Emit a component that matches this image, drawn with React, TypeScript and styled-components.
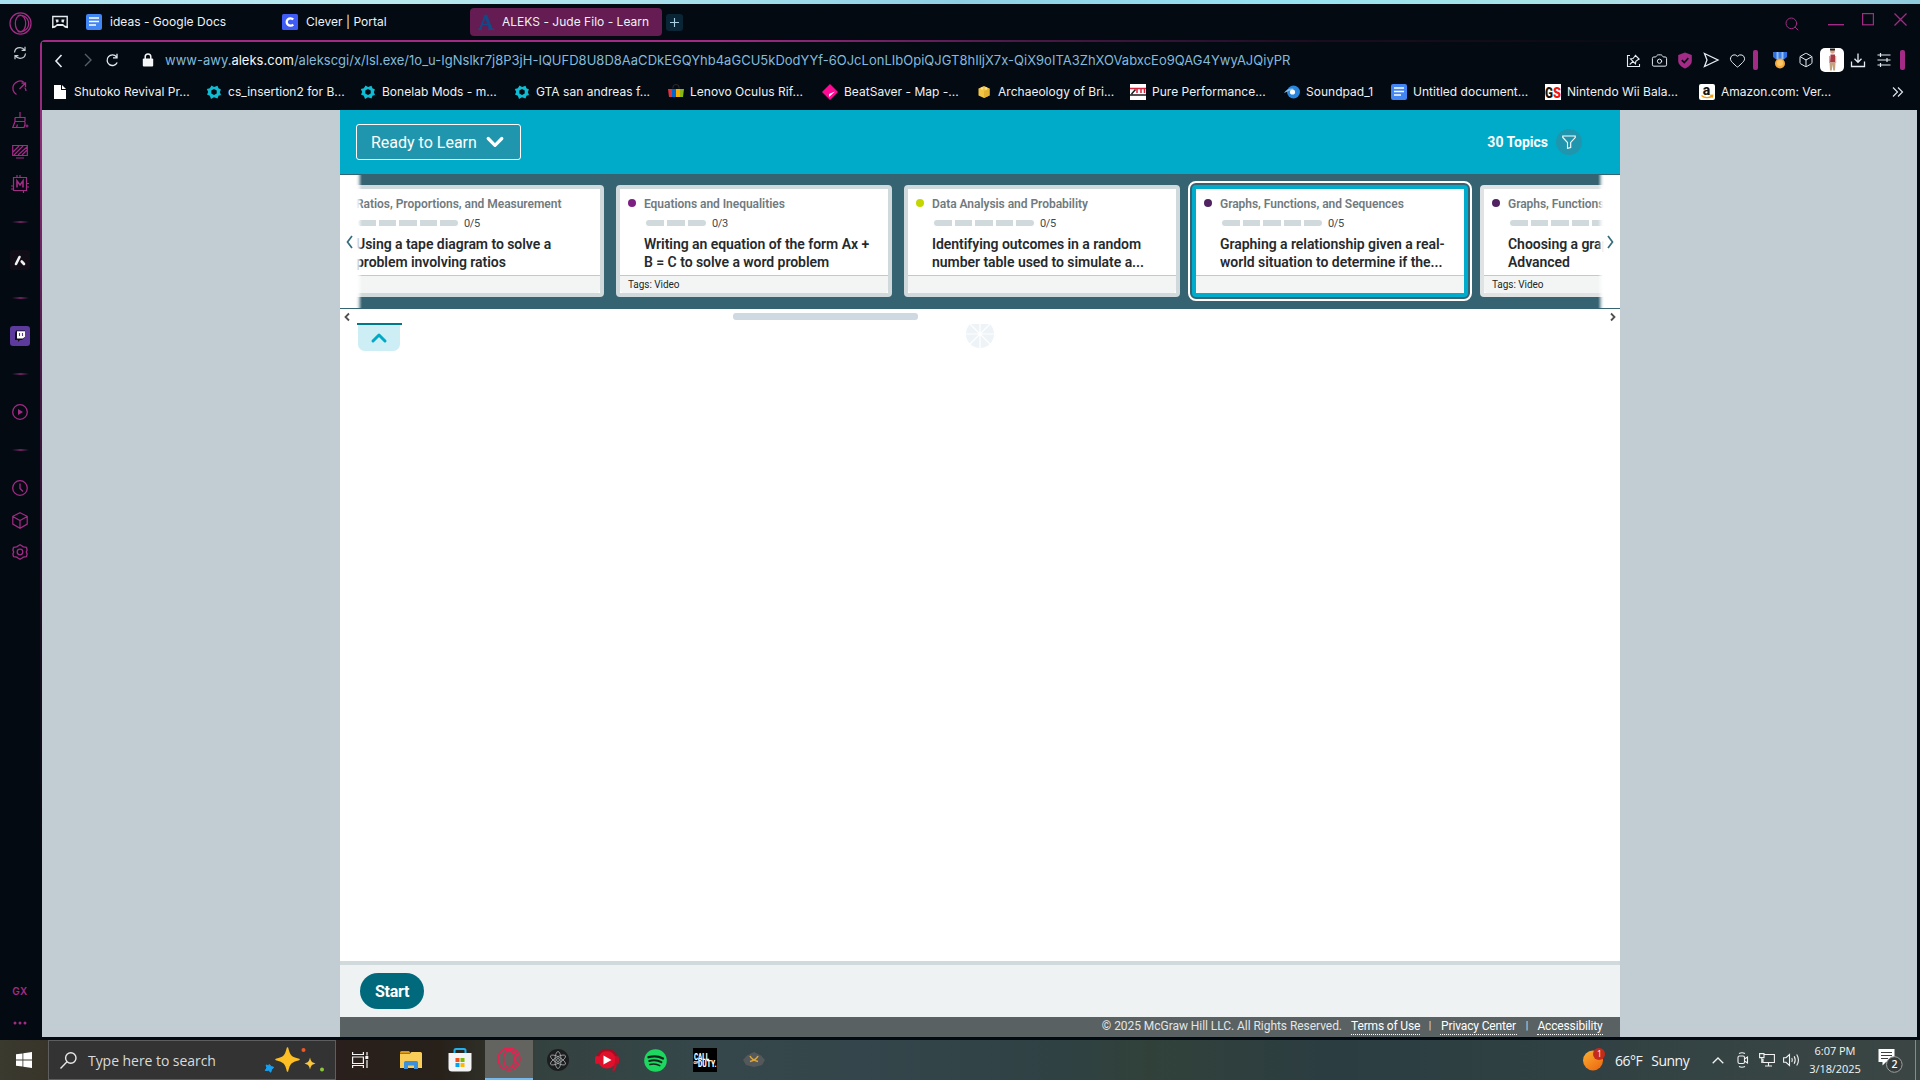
import React from 'react';
import styled, { createGlobalStyle } from 'styled-components';
import { Box, Camera, Heart, Search } from 'lucide-react';

const UI = '"Inter", "Liberation Sans", sans-serif';
const PAGE = '"Roboto", "Liberation Sans", sans-serif';
const WIN = '"Open Sans", "Noto Sans", sans-serif';
const MAGENTA = '#a32b86';
const DARK = '#030a12';

const Global = createGlobalStyle`
  *, *::before, *::after { box-sizing: border-box; }
  body { margin: 0; background: ${DARK}; overflow: hidden; }
  svg { display: block; flex: none; overflow: visible; }
`;

const Screen = styled.div`
  width: 1920px;
  height: 1080px;
  display: flex;
  flex-direction: column;
  background: ${DARK};
  font-family: ${UI};
  overflow: hidden;
`;
const Wallpaper = styled.div`
  height: 4px;
  flex: none;
  background: linear-gradient(90deg, #a9e1f0, #b9e9ee 20%, #9fdcea 40%, #8fcfe4 50%, #96e2f2 66%, #a6e3e6 80%, #b0dbe6 88%, #8fcbdd);
`;
const Browser = styled.div`
  height: 1036px;
  display: flex;
`;

/* Sidebar */
const Sidebar = styled.nav`
  width: 40px;
  padding-bottom: 1px;
  display: flex;
  flex-direction: column;
  flex: none;
  color: ${MAGENTA};
`;
const SideSlot = styled.div<{ $h?: number; $top?: string }>`
  height: ${p => p.$h ?? 32}px;
  margin-top: ${p => p.$top ?? '0'};
  display: flex;
  align-items: center;
  justify-content: center;
  flex: none;
`;
const SideRule = styled.div`
  width: 17px;
  height: 2px;
  background: linear-gradient(90deg, transparent, #6b2360 50%, transparent);
`;
const SideApp = styled.div<{ $bg: string }>`
  width: 20px;
  height: 20px;
  border-radius: 3px;
  background: ${p => p.$bg};
  display: flex;
  align-items: center;
  justify-content: center;
`;
const GxLabel = styled.span`
  font-size: 10px;
  font-weight: 600;
  letter-spacing: 0.4px;
`;

/* Window chrome */
const Main = styled.div`
  flex: 1;
  min-width: 0;
  display: flex;
  flex-direction: column;
`;
const TabStrip = styled.div`
  height: 36px;
  padding: 4px 4px 4px 12px;
  display: flex;
  align-items: center;
  flex: none;
`;
const Tabs = styled.div`
  display: flex;
  align-items: center;
  gap: 4px;
  margin-left: 10px;
`;
const Tab = styled.div<{ $active?: boolean }>`
  width: 192px;
  height: 28px;
  padding: 0 8px;
  display: flex;
  align-items: center;
  gap: 8px;
  border-radius: 4px;
  color: #eef2f5;
  font-size: 12px;
  white-space: nowrap;
  background: ${p => (p.$active ? '#641c52' : 'transparent')};
`;
const TabTitle = styled.span`
  padding-bottom: 1px;
  line-height: 16px;
  letter-spacing: 0.02px;
`;
const NewTab = styled.div`
  width: 17px;
  height: 17px;
  border-radius: 3px;
  background: #0a2536;
  display: flex;
  align-items: center;
  justify-content: center;
`;
const WindowButtons = styled.div`
  margin-left: auto;
  display: flex;
  align-items: center;
  color: ${MAGENTA};
`;
const WindowSlot = styled.div<{ $gap?: number; $drop?: number }>`
  width: 32px;
  margin-right: ${p => p.$gap ?? 0}px;
  padding-top: ${p => p.$drop ?? 0}px;
  height: 24px;
  display: flex;
  justify-content: center;
`;
const Frame = styled.div`
  flex: 1;
  padding: 2px 0 0 2px;
  border-top-left-radius: 5px;
  background:
    linear-gradient(90deg, ${MAGENTA} 0%, ${MAGENTA} 36%, #4c1a48 52%, #1b0d20 68%, ${DARK} 90%) 0 0 / 100% 2px no-repeat,
    linear-gradient(180deg, ${MAGENTA} 0%, #8a2a76 12%, #4a1a48 33%, #1c0e23 58%, ${DARK} 85%) 0 0 / 2px 100% no-repeat;
`;
const FrameInner = styled.div`
  height: 100%;
  display: flex;
  flex-direction: column;
  background: ${DARK};
  border-top-left-radius: 4px;
`;
const NavBar = styled.div`
  height: 36px;
  padding: 0 15px 0 3px;
  display: flex;
  align-items: center;
  flex: none;
  color: #e6edf2;
`;
const Slot = styled.div<{ $w?: number; $ml?: number }>`
  width: ${p => p.$w ?? 26}px;
  margin-left: ${p => p.$ml ?? 0}px;
  display: flex;
  align-items: center;
  justify-content: center;
  flex: none;
`;
const Url = styled.div`
  flex: 1;
  margin-left: 7px;
  font-size: 13px;
  letter-spacing: 0.01px;
  line-height: 20px;
  white-space: nowrap;
  color: #84bbdc;
  b { font-weight: 400; color: #f2f8fb; }
`;
const AccentBar = styled.div<{ $ml: number }>`
  width: 5px;
  height: 20px;
  margin-left: ${p => p.$ml}px;
  border-radius: 2px;
  background: ${MAGENTA};
`;
const Avatar = styled.div`
  width: 24px;
  height: 24px;
  margin-left: 2px;
  border-radius: 5px;
  background: #fff;
  display: flex;
  justify-content: center;
  flex: none;
`;
const Bookmarks = styled.div`
  height: 32px;
  padding: 0 10px 4px 10px;
  display: flex;
  align-items: center;
  flex: none;
`;
const Bookmark = styled.div<{ $w?: number }>`
  width: ${p => p.$w ?? 154}px;
  display: flex;
  align-items: center;
  gap: 6px;
  font-size: 12px;
  line-height: 18px;
  letter-spacing: 0.02px;
  color: #eef2f5;
  white-space: nowrap;
`;
const More = styled.div`
  margin-left: auto;
  margin-right: 6px;
`;

/* Web page */
const Viewport = styled.div`
  width: 1875px;
  height: 927px;
  display: flex;
  justify-content: center;
  padding-left: 1px;
  background: #c1cdd3;
`;
const Page = styled.div`
  width: 1280px;
  display: flex;
  flex-direction: column;
  background: #fff;
  font-family: ${PAGE};
`;
const Header = styled.header`
  height: 64px;
  padding: 0 38px 0 16px;
  display: flex;
  align-items: center;
  justify-content: space-between;
  background: #00abca;
  color: #fff;
`;
const StageButton = styled.button`
  width: 165px;
  height: 36px;
  padding: 0 16px 0 14px;
  display: flex;
  align-items: center;
  justify-content: space-between;
  border: 1px solid #fff;
  border-radius: 3px;
  background: #1f96ad;
  color: #fff;
  font: 400 16px ${PAGE};
`;
const TopicCount = styled.div`
  display: flex;
  align-items: center;
  gap: 8px;
  font-size: 14px;
  font-weight: 700;
  line-height: 18px;
  span { padding-bottom: 1px; }
`;
const FilterButton = styled.div`
  width: 26px;
  height: 26px;
  border-radius: 50%;
  background: #1f96ad;
  display: flex;
  align-items: center;
  justify-content: center;
`;
const Carousel = styled.section`
  position: relative;
  height: 135px;
  padding-top: 11px;
  overflow: hidden;
  background: #356371;
  flex: none;
`;
const CardRow = styled.div`
  display: flex;
  gap: 12px;
  margin-left: -12px;
`;
const CardBox = styled.article<{ $edge: string; $selected?: boolean }>`
  width: 276px;
  height: 112px;
  flex: none;
  display: flex;
  flex-direction: column;
  border: 4px solid ${p => p.$edge};
  border-radius: 4px;
  background: #fff;
  outline: ${p => (p.$selected ? '2px solid #fff' : 'none')};
  outline-offset: 2px;
`;
const CardTop = styled.div`
  height: 24px;
  padding: 5px 0 0 8px;
  display: flex;
  align-items: center;
  gap: 8px;
  color: #717a7e;
  font-size: 12px;
  font-weight: 600;
  letter-spacing: -0.04px;
  line-height: 16px;
  white-space: nowrap;
`;
const Dot = styled.span<{ $c: string }>`
  width: 8px;
  height: 8px;
  margin-top: -1px;
  border-radius: 50%;
  background: ${p => p.$c};
`;
const ProgressRow = styled.div`
  height: 20px;
  padding: 0 0 0 26px;
  display: flex;
  align-items: center;
  gap: 6px;
  color: #41484b;
  font-size: 11px;
  letter-spacing: -0.35px;
`;
const Meter = styled.div<{ $n: number }>`
  width: ${p => p.$n * 20}px;
  height: 6px;
  display: flex;
  gap: 3px;
  border-radius: 3px;
  overflow: hidden;
  span { flex: 1; background: #d0dadd; }
`;
const CardTitle = styled.h3`
  margin: 0;
  height: 42px;
  padding: 2px 0 0 24px;
  color: #262a2c;
  font-size: 14px;
  font-weight: 600;
  letter-spacing: -0.045px;
  line-height: 18px;
  white-space: nowrap;
`;
const CardTags = styled.div`
  flex: 1;
  padding-left: 8px;
  display: flex;
  align-items: center;
  border-top: 1px solid #c3c8c9;
  border-radius: 0 0 4px 4px;
  background: #f3f5f5;
  color: #22272a;
  font-size: 10px;
  letter-spacing: -0.05px;
`;
const Fade = styled.div<{ $side: 'left' | 'right' }>`
  position: absolute;
  top: 1px;
  ${p => p.$side}: 0;
  width: 22px;
  height: 133px;
  display: flex;
  align-items: center;
  justify-content: ${p => (p.$side === 'left' ? 'flex-start' : 'flex-end')};
  padding: 0 6px;
  background: linear-gradient(to ${p => p.$side}, rgba(255,255,255,0) 0, rgba(255,255,255,.85) 4px, #fff 6px);
`;
const ScrollTrack = styled.div`
  height: 14px;
  padding: 4px 4px 0;
  display: flex;
  justify-content: space-between;
  flex: none;
`;
const Thumb = styled.div`
  width: 185px;
  height: 7px;
  margin: 0 auto 0 383px;
  border-radius: 3px;
  background: #cfd9e2;
`;
const Content = styled.main`
  flex: 1;
  display: grid;
  grid-template-columns: 1fr 28px 1fr;
  align-items: start;
`;
const Collapse = styled.div`
  width: 45px;
  margin-left: 17px;
  border-top: 2px solid #007a8b;
`;
const CollapseBody = styled.div`
  width: 42px;
  height: 26px;
  margin-left: 1px;
  display: flex;
  align-items: center;
  justify-content: center;
  border-radius: 0 0 7px 7px;
  background: #cceef4;
`;
const SpinnerCrop = styled.div`
  height: 24px;
  margin-top: 1px;
  display: flex;
  align-items: flex-end;
  overflow: hidden;
`;
const ActionBar = styled.div`
  height: 56px;
  padding-left: 20px;
  display: flex;
  align-items: center;
  flex: none;
  border-top: 4px solid #d0dadd;
  background: #eef2f3;
`;
const StartButton = styled.button`
  width: 64px;
  height: 36px;
  padding: 0;
  border: 0;
  border-radius: 18px;
  background: #00697c;
  color: #fff;
  font: 700 16px ${PAGE};
  letter-spacing: -0.3px;
`;
const Legal = styled.footer`
  height: 20px;
  padding-right: 17px;
  display: flex;
  justify-content: flex-end;
  align-items: flex-start;
  flex: none;
  background: #5a6162;
  color: #e2e6e6;
  font-size: 12px;
  line-height: 16px;
`;
const Copyright = styled.span`
  margin-right: 9px;
  padding-top: 1px;
  letter-spacing: -0.05px;
`;
const LegalLink = styled.a<{ $w: number }>`
  width: ${p => p.$w}px;
  padding-top: 1px;
  text-align: center;
  letter-spacing: -0.15px;
  color: #fff;
  border-bottom: 1px dotted #fff;
  white-space: nowrap;
`;
const Pipe = styled.span`
  width: 20px;
  text-align: center;
  padding-top: 1px;
  font-size: 10px;
`;

/* Taskbar */
const Taskbar = styled.div`
  height: 40px;
  flex: none;
  display: flex;
  align-items: center;
  font-family: ${WIN};
  color: #f3f5f5;
  background: linear-gradient(90deg, #3a3a2f 0, #38342a 48px, #2a1f1c 340px, #27211a 440px, #30332c 500px, #34423f 540px, #35474a 700px, #34464b 860px, #2f4143 1060px, #31413a 1150px, #2c3d42 1330px, #304143 1560px, #3b4644 1920px);
`;
const TaskSlot = styled.div<{ $w: number; $active?: boolean }>`
  width: ${p => p.$w}px;
  height: 40px;
  display: flex;
  align-items: center;
  justify-content: center;
  flex: none;
  background: ${p => (p.$active ? '#63645f' : 'transparent')};
  border-bottom: ${p => (p.$active ? '2px solid #76b9ed' : '0')};
`;
const SearchBox = styled.div`
  width: 288px;
  height: 40px;
  padding: 0 10px 0 11px;
  display: flex;
  align-items: center;
  border: 1px solid #5e5e5e;
  background: #333;
  color: #dadada;
  font-size: 14px;
  span { margin-left: 11px; margin-right: auto; letter-spacing: -0.05px; }
`;
const Tray = styled.div`
  margin-left: auto;
  display: flex;
  align-items: center;
  height: 40px;
`;
const Weather = styled.div`
  width: 123px;
  display: flex;
  align-items: center;
  gap: 9px;
  font-size: 14px;
  letter-spacing: -0.5px;
  white-space: nowrap;
`;
const Clock = styled.div`
  width: 64px;
  text-align: center;
  font-size: 11px;
  line-height: 18px;
  letter-spacing: -0.05px;
`;
const ShowDesktop = styled.div`
  width: 5px;
  height: 40px;
  border-left: 1px solid #868c8c;
`;

/* Icons */
const OperaRing = ({ size, color }: { size: number; color: string }) => (
  <svg width={size} height={size} viewBox="0 0 24 24" fill="none" stroke={color} strokeWidth="1.3">
    <circle cx="12" cy="12" r="11" />
    <ellipse cx="12" cy="12" rx="5.4" ry="8.6" />
    <path d="M9 3.8C13.5 1.8 20.500 5.500 20.500 12S13.500 22.200 9 20.200" />
  </svg>
);
const DocIcon = () => (
  <svg width="16" height="16" viewBox="0 0 16 16">
    <rect width="16" height="16" rx="2" fill="#4285f4" />
    <path d="M3 4h10M3 7.500h10M3 11h7" stroke="#fff" strokeWidth="1.700" />
  </svg>
);
const ModIcon = () => (
  <svg width="16" height="16" viewBox="0 0 16 16">
    <path d="M5.500 1.500L8 3l3.500-1.200 1 2.400L15 5.500 13.800 8l1.200 3-2.500.8-1 2.700L8 13.200 5 15l-1.200-3.200L1 10.500 2.200 8 .8 5l3-.8z" fill="#10bcd4" strokeLinejoin="round" />
    <path d="M8 5l2.700 1.500v3L8 11 5.300 9.500v-3z" fill={DARK} />
  </svg>
);
const Line = ({ d, s = 16, w = 1.2, fill = 'none' }: { d: string; s?: number; w?: number; fill?: string }) => (
  <svg width={s} height={s} viewBox={`0 0 ${s} ${s}`} fill={fill} stroke="currentColor" strokeWidth={w}>
    <path d={d} />
  </svg>
);
const Sync = () => (
  <svg width="14" height="14" viewBox="0 0 14 14" fill="none" stroke="#c9ced2" strokeWidth="1.200">
    <path d="M1.500 6.500C1.800 3.500 4.200 1.700 7 1.700c2 0 3.600.9 4.600 2.400M12 .8v3.600H8.600M12.500 7.500c-.3 3-2.700 4.800-5.500 4.800-2 0-3.600-.9-4.600-2.400M2 13.200V9.600h3.400" />
  </svg>
);
const StoreBag = () => (
  <svg width="16" height="16" viewBox="0 0 16 16">
    <path d="M5 4.500V3a3 2.500 0 0 1 6 0v1.500" fill="none" stroke="#2a2a2a" />
    <path d="M0 5h4v8H1z" fill="#e53238" /><path d="M4 5h4v8H4z" fill="#0064d2" />
    <path d="M8 5h4v8H8z" fill="#f5af02" /><path d="M12 5h4l-1 8h-3z" fill="#86b817" />
  </svg>
);
const BeatSaver = () => (
  <svg width="16" height="16" viewBox="0 0 16 16">
    <path d="M8 0l8 8-8 8-8-8z" fill="#ff0b93" /><path d="M13 7.500L7 10v3z" fill="#fff" />
  </svg>
);
const Brick = () => (
  <svg width="12" height="14" viewBox="0 0 12 14">
    <path d="M6 1l5.500 2.500v7L6 13 .5 10.500v-7z" fill="#f4c542" />
    <path d="M6 6l5.500-2.500v7L6 13z" fill="#e5b132" />
    <circle cx="4" cy="3.500" r="1.300" fill="#ffe08a" /><circle cx="8" cy="3.500" r="1.300" fill="#ffe08a" />
  </svg>
);
const PureIcon = () => (
  <svg width="16" height="16" viewBox="0 0 16 16">
    <rect width="16" height="16" fill="#fff" />
    <path d="M0 4.500h16M7 5v4M11 5v4M14.500 5v4" stroke="#d5213a" strokeWidth="1.500" />
    <path d="M1.500 10L5.500 5.500M0 11h16" stroke="#1b1b1b" strokeWidth="1.500" />
  </svg>
);
const Soundpad = () => (
  <svg width="16" height="16" viewBox="0 0 16 16">
    <circle cx="9.500" cy="8" r="6.500" fill="#2a86dc" />
    <path d="M0 9C2 5.500 6 3.500 10 5L6 6.500z" fill="#7fc0f5" />
    <circle cx="8.500" cy="8" r="2.600" fill="#fff" />
  </svg>
);
const GsIcon = () => (
  <svg width="16" height="16" viewBox="0 0 16 16">
    <rect width="16" height="16" fill="#fff" />
    <text x="0" y="13.500" fontFamily="Roboto, sans-serif" fontWeight="900" fontSize="15" textLength="8" lengthAdjust="spacingAndGlyphs" fill="#111">G</text>
    <text x="8" y="13.500" fontFamily="Roboto, sans-serif" fontWeight="900" fontSize="15" textLength="8" lengthAdjust="spacingAndGlyphs" fill="#f01414">S</text>
  </svg>
);
const AmazonIcon = () => (
  <svg width="16" height="16" viewBox="0 0 16 16">
    <rect width="16" height="16" rx="2" fill="#fff" />
    <text x="3.700" y="10.500" fontFamily="Roboto, sans-serif" fontWeight="800" fontSize="14" fill="#111">a</text>
    <path d="M2.500 11.500c3 2.700 7.500 2.700 10.500.6M11.200 11.300l2.500-.2-.5 2.500" fill="none" stroke="#f90" strokeWidth="1.300" />
  </svg>
);

type Topic = { area: string; dot: string; steps: number; lines: [string, string]; tags?: string; edge?: string; selected?: boolean };
const topics: Topic[] = [
  { area: 'Ratios, Proportions, and Measurement', dot: '#2a7fb8', steps: 5, lines: ['Using a tape diagram to solve a', 'problem involving ratios'] },
  { area: 'Equations and Inequalities', dot: '#7b1f83', steps: 3, lines: ['Writing an equation of the form Ax +', 'B = C to solve a word problem'], tags: 'Tags: Video' },
  { area: 'Data Analysis and Probability', dot: '#c3d600', steps: 5, lines: ['Identifying outcomes in a random', 'number table used to simulate a...'] },
  { area: 'Graphs, Functions, and Sequences', dot: '#4f2260', steps: 5, lines: ['Graphing a relationship given a real-', 'world situation to determine if the...'], edge: '#00accb', selected: true },
  { area: 'Graphs, Functions, and Sequences', dot: '#4f2260', steps: 5, lines: ['Choosing a graph', 'Advanced'], tags: 'Tags: Video', edge: '#dfe3e4' },
];

const TopicCard = ({ t }: { t: Topic }) => (
  <CardBox $edge={t.edge ?? '#d0dadd'} $selected={t.selected}>
    <CardTop><Dot $c={t.dot} />{t.area}</CardTop>
    <ProgressRow>
      <Meter $n={t.steps}>{Array.from({ length: t.steps }, (_, i) => <span key={i} />)}</Meter>
      0/{t.steps}
    </ProgressRow>
    <CardTitle>{t.lines[0]}<br />{t.lines[1]}</CardTitle>
    <CardTags>{t.tags}</CardTags>
  </CardBox>
);

const bookmarks: [React.ReactNode, string, number?][] = [
  [<svg width="16" height="16" viewBox="0 0 16 16"><path d="M2 1h7v5h5v9H2z" fill="#fff" /><path d="M10 1l4 4h-4z" fill="#fff" /></svg>, 'Shutoko Revival Pr...'],
  [<ModIcon />, 'cs_insertion2 for B...'],
  [<ModIcon />, 'Bonelab Mods - m...'],
  [<ModIcon />, 'GTA san andreas f...'],
  [<StoreBag />, 'Lenovo Oculus Rif...'],
  [<BeatSaver />, 'BeatSaver - Map -...'],
  [<Slot $w={16}><Brick /></Slot>, 'Archaeology of Bri...'],
  [<PureIcon />, 'Pure Performance...'],
  [<Soundpad />, 'Soundpad_1', 107],
  [<DocIcon />, 'Untitled document...'],
  [<GsIcon />, 'Nintendo Wii Bala...'],
  [<AmazonIcon />, 'Amazon.com: Ver...'],
];

const SideRail = () => (
  <Sidebar>
    <SideSlot $h={38}><OperaRing size={23} color={MAGENTA} /></SideSlot>
    <SideSlot $h={22}><Sync /></SideSlot>
    <SideSlot $top="8px"><Line d="M4.500 14.500A7 7 0 1 1 11.500 1.900M7.500 9l5.500-5.500M12.800 7.500a7 7 0 0 1 1.200 3.500M9.500 3.200l4-.2v4" w={1.3} /></SideSlot>
    <SideSlot>
      <Line d="M8 0v5M3 5.500h10v3.500M3 5.500v4M3 9.500h10M3 9.500L.8 15.500H12l1-3M13 9.500v4M13.500 14h3M15 12.500v3M4.500 15.500l1-3" s={17} w={1.2} />
    </SideSlot>
    <SideSlot><Line d="M.7 1.500h14.600v10H.7zM4 14h8M1 8l6-6M2 11l9-9M6 11l9-8M10 11l5-5" w={1.2} /></SideSlot>
    <SideSlot>
      <svg width="18" height="18" viewBox="0 0 18 18" fill="none" stroke="currentColor" strokeWidth="1.200">
        <path d="M2.500 2.500h13v13h-13zM6 0v2.500M9 0v2.500M12.500 15.500V18M0 11h2.500M0 14h2.500M15.500 8.500H18M15.500 12H18" />
        <path d="M6 12.500V6l3 4 3-4v6.500" strokeWidth="1.600" />
      </svg>
    </SideSlot>
    <SideSlot $h={44}><SideRule /></SideSlot>
    <SideSlot>
      <SideApp $bg="#110d17">
        <svg width="12" height="11" viewBox="0 0 12 11" stroke="#f1f1f1" strokeWidth="2.600" strokeLinecap="round"><path d="M2 9l3.500-7M7.700 6.500L10 9" /></svg>
      </SideApp>
    </SideSlot>
    <SideSlot $h={44}><SideRule /></SideSlot>
    <SideSlot>
      <SideApp $bg="#5d3b9c">
        <svg width="12" height="12" viewBox="0 0 12 12">
          <path d="M2 .5h9v6.500l-3 3H6L4 12V10H1V3z" fill="#111018" />
          <path d="M3 1.200h8v5.500L8.800 8.500H3z" fill="#fff" />
          <path d="M5.500 3v3M8.500 3v3" stroke="#5d3b9c" strokeWidth="1.100" />
        </svg>
      </SideApp>
    </SideSlot>
    <SideSlot $h={44}><SideRule /></SideSlot>
    <SideSlot>
      <svg width="16" height="16" viewBox="0 0 16 16"><circle cx="8" cy="8" r="7.300" fill="none" stroke="currentColor" strokeWidth="1.300" /><path d="M6 5l5 3-5 3z" fill="currentColor" /></svg>
    </SideSlot>
    <SideSlot $h={44}><SideRule /></SideSlot>
    <SideSlot><Line d="M8 .7a7.300 7.300 0 1 1 0 14.600A7.300 7.300 0 1 1 8 .7M8 3.500v5l3 3" w={1.3} /></SideSlot>
    <SideSlot><Line d="M8 .7l7.200 3.600v7.800L8 16.300.8 12.100V4.300zM.8 4.500L8 8.500l7.200-4M8 8.500v7.500" s={16} w={1.2} /></SideSlot>
    <SideSlot>
      <svg width="16" height="16" viewBox="0 0 16 16" fill="none" stroke="currentColor" strokeWidth="1.300">
        <path d="M6.300 1.800L8 .7l1.700 1.100 1.600 1.100 3.200.4.600 2.700L14.300 8l.8 2-.6 2.700-3.200.4-1.600 1.100L8 15.300l-1.700-1.100-1.600-1.100-3.200-.4L.9 10l.8-2-.8-2 .6-2.700 3.200-.4z" strokeLinejoin="round" />
        <circle cx="8" cy="8" r="2.800" />
      </svg>
    </SideSlot>
    <SideSlot $h={33} $top="auto"><GxLabel>GX</GxLabel></SideSlot>
    <SideSlot>
      <svg width="14" height="4" viewBox="0 0 14 4" fill="currentColor"><circle cx="2" cy="2" r="1.500" /><circle cx="7" cy="2" r="1.500" /><circle cx="12" cy="2" r="1.500" /></svg>
    </SideSlot>
  </Sidebar>
);

const TitleBar = () => (
  <TabStrip>
    <svg width="16" height="14" viewBox="0 0 16 14">
      <path d="M.8 11.500V1.500h14.400v10" fill="none" stroke="#e6ebee" strokeWidth="1.400" />
      <path d="M3.500 4.500h3v2.500l-2 .8zM12.500 4.500h-3v2.500l2 .8zM0 13.300V11l3-.2 2-1.800h6l2 1.800 3 .2v2.300l-3-.6-2-1.700H5l-2 1.700z" fill="#e6ebee" />
    </svg>
    <Tabs>
      <Tab><DocIcon /><TabTitle>ideas - Google Docs</TabTitle></Tab>
      <Tab>
        <svg width="16" height="16" viewBox="0 0 16 16"><rect width="16" height="16" rx="1.500" fill="#3f5cf5" /><path d="M11.200 5.600A3.700 3.700 0 1 0 11.200 10.400" fill="none" stroke="#fff" strokeWidth="2.300" /></svg>
        <TabTitle>Clever | Portal</TabTitle>
      </Tab>
      <Tab $active>
        <svg width="16" height="16" viewBox="0 0 16 16" fill="none" stroke="#124a88"><path d="M2 15.500L7.500 1" strokeWidth="2" /><path d="M7.500 1L13 15.500" strokeWidth="3.200" /><path d="M4 10.500h7.500M.3 15.300h3.500M10 15.300h6" strokeWidth="1.400" /></svg>
        <TabTitle>ALEKS - Jude Filo - Learn</TabTitle>
      </Tab>
      <NewTab><svg width="9" height="9" viewBox="0 0 9 9" stroke="#a9cfe4" strokeWidth="1.100"><path d="M4.500 0v9M0 4.500h9" /></svg></NewTab>
    </Tabs>
    <WindowButtons>
      <WindowSlot $gap={12} $drop={6}><Search size={16} strokeWidth={1.5} /></WindowSlot>
      <WindowSlot $drop={14}><svg width="16" height="2" viewBox="0 0 16 2"><path d="M0 .7h16" stroke="currentColor" strokeWidth="1.400" /></svg></WindowSlot>
      <WindowSlot $drop={3}><svg width="12" height="13" viewBox="0 0 12 13"><rect x=".6" y=".6" width="10.800" height="11.200" fill="none" stroke="currentColor" strokeWidth="1.200" /></svg></WindowSlot>
      <WindowSlot $drop={3}><svg width="13" height="13" viewBox="0 0 13 13"><path d="M.5.500l12 12M12.500.500l-12 12" stroke="currentColor" strokeWidth="1.300" /></svg></WindowSlot>
    </WindowButtons>
  </TabStrip>
);

const AddressBar = () => (
  <NavBar>
    <Slot $w={28}><Line d="M9.500 2L4 8l5.500 6" s={14} w={1.6} /></Slot>
    <Slot $w={29}><svg width="12" height="14" viewBox="0 0 12 14" fill="none" stroke="#56606a" strokeWidth="1.400"><path d="M3 1l6 6-6 6" /></svg></Slot>
    <Slot $w={20}><Line d="M12.200 9.500A5.300 5.300 0 1 1 11.500 3.800M12 0.800v4H8" s={14} w={1.3} /></Slot>
    <Slot $w={20} $ml={16}>
      <svg width="12" height="14" viewBox="0 0 12 14"><rect x=".8" y="5.500" width="10.400" height="8" rx="1" fill="#f4f6f7" /><path d="M3.200 6V3.800a2.800 2.800 0 0 1 5.600 0V6" fill="none" stroke="#f4f6f7" strokeWidth="1.500" /></svg>
    </Slot>
    <Url>www-awy.<b>aleks.com</b>/alekscgi/x/lsl.exe/1o_u-IgNslkr7j8P3jH-IQUFD8U8D8AaCDkEGQYhb4aGCU5kDodYYf-6OJcLonLIbOpiQJGT8hIljX7x-QiX9oITA3ZhXOVabxcEo9QAG4YwyAJQiyPR</Url>
    <Slot><Line d="M4 2.500H1.500V13.500h12V11M9 2l4.500 4.500M9.500 2.500L7 5.500l-2.500.3 5 5 .3-2.500 3.200-2.300M7 8.300L3.700 11.500" s={15} w={1.1} /></Slot>
    <Slot><Camera size={17} strokeWidth={1.4} /></Slot>
    <Slot>
      <svg width="16" height="17" viewBox="0 0 16 17"><path d="M8 .5l6.800 2.500v6c0 3.500-3.500 6-6.800 7.500C4.700 15 1.200 12.500 1.200 9V3z" fill={MAGENTA} /><path d="M4.800 8.200l2.500 2.400 4-4.500" fill="none" stroke={DARK} strokeWidth="1.600" /></svg>
    </Slot>
    <Slot><Line d="M1.500 1.500L15 8 1.500 14.500 4 8z" w={1.3} /></Slot>
    <Slot><Heart size={17} strokeWidth={1.4} /></Slot>
    <AccentBar $ml={3} />
    <Slot $ml={9}>
      <svg width="16" height="17" viewBox="0 0 16 17">
        <path d="M1 0h14v5l-5 4H6L1 5z" fill="#2f6fe0" /><path d="M4.500 0h7v7h-7z" fill="#8dbcf7" /><path d="M6.500 0h3v7h-3z" fill="#3e7fe8" />
        <circle cx="8" cy="11.500" r="5" fill="#f5a93c" /><circle cx="8" cy="11" r="3" fill="#ffc766" />
      </svg>
    </Slot>
    <Slot $w={25}><Box size={16} strokeWidth={1.5} /></Slot>
    <Avatar>
      <svg width="12" height="24" viewBox="0 0 12 24">
        <circle cx="6.500" cy="3.500" r="2.300" fill="#d9a384" /><path d="M4 .5h5v2H4z" fill="#1e1a1a" />
        <path d="M4.500 6.500h4.500v8H4z" fill="#a83a43" /><path d="M3.500 14.500h6L9 22.500H7.200l-.6-6-.8 6H4z" fill="#c4a27d" />
        <path d="M3.500 8v7M9.700 8v7" stroke="#d9a384" />
      </svg>
    </Avatar>
    <Slot $ml={1}><Line d="M8 1.500v8.500M4.500 6.800L8 10.300l3.500-3.500M1.500 9.500v5h13v-5" w={1.3} /></Slot>
    <Slot><Line d="M1.500 3h13M1.500 8h13M1.500 13h13M4.500 1v4M11 6v4M4.500 11v4" w={1.2} /></Slot>
    <AccentBar $ml={3} />
  </NavBar>
);

const TopicPage = () => (
  <Page>
    <Header>
      <StageButton>
        Ready to Learn
        <svg width="18" height="12" viewBox="0 0 18 12"><path d="M2.200 2.500L9 9.300l6.800-6.800" fill="none" stroke="#fff" strokeWidth="3.200" strokeLinecap="round" strokeLinejoin="round" /></svg>
      </StageButton>
      <TopicCount>
        <span>30 Topics</span>
        <FilterButton><svg width="14" height="14" viewBox="0 0 14 14"><path d="M.8 1h12.400v1.500L8.700 7.500v5l-3.200.7V7.500L.8 2.500z" fill="none" stroke="#fff" strokeWidth="1.100" /></svg></FilterButton>
      </TopicCount>
    </Header>
    <Carousel>
      <CardRow>{topics.map((t, i) => <TopicCard key={i} t={t} />)}</CardRow>
      <Fade $side="left"><svg width="7" height="14" viewBox="0 0 7 14"><path d="M6 1L1.500 7 6 13" fill="none" stroke="#356c7b" strokeWidth="1.700" /></svg></Fade>
      <Fade $side="right"><svg width="7" height="14" viewBox="0 0 7 14"><path d="M1 1l4.500 6L1 13" fill="none" stroke="#356c7b" strokeWidth="1.700" /></svg></Fade>
    </Carousel>
    <ScrollTrack>
      <svg width="6" height="8" viewBox="0 0 6 8"><path d="M5 .5L1.500 4 5 7.500" fill="none" stroke="#505050" strokeWidth="1.800" /></svg>
      <Thumb />
      <svg width="6" height="8" viewBox="0 0 6 8"><path d="M1 .5L4.500 4 1 7.500" fill="none" stroke="#505050" strokeWidth="1.800" /></svg>
    </ScrollTrack>
    <Content>
      <Collapse>
        <CollapseBody><svg width="16" height="10" viewBox="0 0 16 10"><path d="M2 8l6-6 6 6" fill="none" stroke="#00a9c6" strokeWidth="3" strokeLinecap="round" strokeLinejoin="round" /></svg></CollapseBody>
      </Collapse>
      <SpinnerCrop>
        <svg width="28" height="28" viewBox="0 0 28 28">
          <circle cx="14" cy="14" r="14" fill="#edf3f7" />
          <path d="M14 0v28M0 14h28M4 4l20 20M24 4L4 24" stroke="#fff" strokeWidth="1.200" />
        </svg>
      </SpinnerCrop>
    </Content>
    <ActionBar><StartButton>Start</StartButton></ActionBar>
    <Legal>
      <Copyright>© 2025 McGraw Hill LLC. All Rights Reserved.</Copyright>
      <LegalLink $w={69}>Terms of Use</LegalLink>
      <Pipe>|</Pipe>
      <LegalLink $w={77}>Privacy Center</LegalLink>
      <Pipe>|</Pipe>
      <LegalLink $w={66}>Accessibility</LegalLink>
    </Legal>
  </Page>
);

const WindowsBar = () => (
  <Taskbar>
    <TaskSlot $w={48}><svg width="16" height="16" viewBox="0 0 16 16" fill="#fff"><path d="M0 2.300L6.500 1.400v6.100H0zM7.300 1.300L16 0v7.500H7.300zM0 8.400h6.500v6.200L0 13.700zM7.300 8.400H16V16l-8.700-1.300z" /></svg></TaskSlot>
    <SearchBox>
      <svg width="17" height="17" viewBox="0 0 17 17" fill="none" stroke="#e8e8e8" strokeWidth="1.400"><circle cx="10.800" cy="6" r="5.200" /><path d="M7 9.800L.5 16.400" /></svg>
      <span>Type here to search</span>
      <svg width="62" height="30" viewBox="0 0 62 30">
        <path d="M24.500 3c1.800 8 3.500 9.500 11.500 11.500-8 2-9.700 3.500-11.500 11.500C22.700 18 21 16.500 13 14.500 21 12.500 22.700 11 24.500 3z" fill="#fdbf24" stroke="#fdbf24" strokeWidth="1.500" strokeLinejoin="round" />
        <path d="M47 12.500c1 4 1.500 4.800 5.500 6-4 1.200-4.500 2-5.500 6-1-4-1.500-4.800-5.500-6 4-1.200 4.500-2 5.500-6z" fill="#fcc63a" />
        <path d="M6 19.500l2.300 1.900 2.500 1-2.200 1.800-.8 3-2.300-1.900-3.200.2 1.600-2.700-.8-2.800 2.700.8z" fill="#18a0f0" stroke="#18a0f0" strokeLinejoin="round" />
        <circle cx="40.500" cy="5" r="2" fill="#ee5a24" /><circle cx="59" cy="24.500" r="2" fill="#8bc83c" />
      </svg>
    </SearchBox>
    <TaskSlot $w={48}>
      <svg width="17" height="16" viewBox="0 0 17 16" fill="none" stroke="#f4f4f4" strokeWidth="1.200"><path d="M.6 0v2.500h10.800V0M.6 5h10.800v6.500H.6zM.6 16v-2.500h10.800V16M15 0v3.500M15 8v8" /><path d="M13.300 4h3v3h-3z" fill="#f4f4f4" stroke="none" /></svg>
    </TaskSlot>
    <TaskSlot $w={53}>
      <svg width="22" height="18" viewBox="0 0 22 18"><path d="M0 1.500Q0 0 1.500 0H9l1.500 2H0z" fill="#d99a12" /><path d="M0 2.500h10L11.500 1h9Q22 1 22 2.500V17H0z" fill="#f9cd58" /><path d="M4 18v-6.500Q4 10 5.500 10h11q1.500 0 1.500 1.500V18h-4v-3.500H8V18z" fill="#3c91dd" /></svg>
    </TaskSlot>
    <TaskSlot $w={46}>
      <svg width="24" height="24" viewBox="0 0 24 24"><path d="M6.500 5V2.500Q6.500 1 8 1h8q1.500 0 1.500 1.500V5" fill="none" stroke="#22b0ee" strokeWidth="2" /><path d="M.5 5h23v15q0 3.500-3.500 3.500H4Q.5 23.500.5 20z" fill="#f2f4f5" /><path d="M7.500 10h4v4h-4z" fill="#f25022" /><path d="M12.500 10h4v4h-4z" fill="#7fba00" /><path d="M7.500 15h4v4h-4z" fill="#00a4ef" /><path d="M12.500 15h4v4h-4z" fill="#ffb900" /></svg>
    </TaskSlot>
    <Slot $w={2} />
    <TaskSlot $w={48} $active><OperaRing size={24} color="#ea1f50" /></TaskSlot>
    <TaskSlot $w={49}>
      <svg width="22" height="22" viewBox="0 0 22 22" fill="none" stroke="#a9acac" strokeWidth="0.800"><circle cx="11" cy="11" r="11" fill="#1b1d1e" stroke="none" /><ellipse cx="11" cy="11" rx="3" ry="8.500" /><ellipse cx="11" cy="11" rx="3" ry="8.500" transform="rotate(60 11 11)" /><ellipse cx="11" cy="11" rx="3" ry="8.500" transform="rotate(120 11 11)" /><circle cx="11" cy="11" r="1.500" /></svg>
    </TaskSlot>
    <TaskSlot $w={49}>
      <svg width="24" height="24" viewBox="0 0 24 24"><circle cx="12" cy="11" r="9.500" fill="#e0102c" /><path d="M3 8A9.700 9.700 0 0 1 21 8" fill="none" stroke="#a40d22" strokeWidth="2.500" /><rect x="0" y="8" width="4" height="8" rx="2" fill="#e0102c" /><rect x="20" y="8" width="4" height="8" rx="2" fill="#c20e28" /><path d="M20.500 15q0 6-3 7.500" stroke="#c20e28" strokeWidth="2.500" fill="none" /><path d="M8.500 7.500l8 4.500-8 4.500z" fill="#fff" /></svg>
    </TaskSlot>
    <TaskSlot $w={49}>
      <svg width="23" height="23" viewBox="0 0 23 23" fill="none" stroke="#12241b" strokeLinecap="round"><circle cx="11.500" cy="11.500" r="11.300" fill="#1ed760" stroke="none" /><path d="M4.500 8.200c5-1.400 10.500-.9 14.500 1.300" strokeWidth="2.300" /><path d="M5.200 12c4.300-1.200 8.800-.7 12.200 1.200" strokeWidth="1.900" /><path d="M5.800 15.500c3.500-.9 7.200-.5 10 1.100" strokeWidth="1.500" /></svg>
    </TaskSlot>
    <TaskSlot $w={49}>
      <svg width="24" height="24" viewBox="0 0 24 24" fontFamily="Roboto, sans-serif" fontWeight="900" fill="#fff"><rect width="24" height="24" fill="#000" /><text x="1" y="11.500" fontSize="9.500" textLength="15" lengthAdjust="spacingAndGlyphs">CALL</text><text x="0.500" y="15.500" fontSize="4">OF</text><text x="5" y="19" fontSize="9.500" textLength="18.500" lengthAdjust="spacingAndGlyphs">DUTY.</text></svg>
    </TaskSlot>
    <TaskSlot $w={49}>
      <svg width="22" height="18" viewBox="0 0 22 18"><path d="M11 1l7 3.500L22 9l-3 5-8 2-8-2L0 9l4-4.500z" fill="#55585a" /><path d="M7 5c2 4 6 5 8 5.500M15 5c-2 4-6 5-8 5.500" fill="none" stroke="#dba73a" strokeWidth="1.600" /></svg>
    </TaskSlot>
    <Tray>
      <Weather>
        <svg width="24" height="24" viewBox="0 0 24 24"><defs><linearGradient id="sun" x1="0" y1="0" x2=".7" y2="1"><stop offset="0" stopColor="#f9b233" /><stop offset="1" stopColor="#ef6c12" /></linearGradient></defs><circle cx="11" cy="12.500" r="10" fill="url(#sun)" /><circle cx="17" cy="6" r="6" fill="#c42b1c" /><text x="15" y="9" fontFamily={WIN} fontSize="8.500" fill="#fff">1</text></svg>
        <span>66°F</span><span>Sunny</span>
      </Weather>
      <TaskSlot $w={26}><svg width="12" height="7" viewBox="0 0 12 7"><path d="M.7 6.300L6 1l5.300 5.300" fill="none" stroke="#f2f2f2" strokeWidth="1.300" /></svg></TaskSlot>
      <TaskSlot $w={24}><svg width="12" height="16" viewBox="0 0 12 16" fill="none" stroke="#f2f2f2" strokeWidth="1.100"><rect x="1" y="4" width="6.500" height="7.500" rx="1.500" /><path d="M7.500 7l3-2v6l-3-2M2 1.500Q5 0 8 1.500M2 14.500q3 1.500 6 0" /></svg></TaskSlot>
      <TaskSlot $w={24}><svg width="16" height="14" viewBox="0 0 16 14" fill="none" stroke="#f2f2f2" strokeWidth="1.100"><path d="M5 1.500h10.400v8H4V6M.6.600H5v4H.6zM2.800 4.600V10M9.500 9.500V13M6 13h7" /></svg></TaskSlot>
      <TaskSlot $w={24}><svg width="17" height="14" viewBox="0 0 17 14" fill="none" stroke="#f2f2f2" strokeWidth="1.100"><path d="M.6 4.700H3L6.500 1.500v11L3 9.300H.6zM8.800 5q1 2 0 4M11.200 3.300q2 3.700 0 7.400M13.700 1.500q3.500 5.500 0 11" /></svg></TaskSlot>
      <Clock>6:07 PM<br />3/18/2025</Clock>
      <TaskSlot $w={48}>
        <svg width="26" height="26" viewBox="0 0 26 26"><path d="M.5 2h16v13H8l-3.500 3.500V15h-4z" fill="#fff" /><path d="M3 5.500h11M3 8.500h11M3 11.500h7" stroke="#39423f" strokeWidth="1.200" /><circle cx="16.300" cy="17.500" r="7.800" fill="#353b3a" stroke="#9ba09f" /><text x="13.400" y="21.300" fontFamily={WIN} fontWeight="600" fontSize="10.500" fill="#fff">2</text></svg>
      </TaskSlot>
      <ShowDesktop />
    </Tray>
  </Taskbar>
);

export default function App() {
  return (
    <Screen>
      <Global />
      <Wallpaper />
      <Browser>
        <SideRail />
        <Main>
          <TitleBar />
          <Frame>
            <FrameInner>
              <AddressBar />
              <Bookmarks>
                {bookmarks.map(([icon, label, w]) => <Bookmark key={label} $w={w}>{icon}{label}</Bookmark>)}
                <More><svg width="12" height="12" viewBox="0 0 12 12"><path d="M1 1.500L5.500 6 1 10.500M6 1.500L10.500 6 6 10.500" fill="none" stroke="#dfe5e9" strokeWidth="1.200" /></svg></More>
              </Bookmarks>
              <Viewport><TopicPage /></Viewport>
            </FrameInner>
          </Frame>
        </Main>
      </Browser>
      <WindowsBar />
    </Screen>
  );
}
